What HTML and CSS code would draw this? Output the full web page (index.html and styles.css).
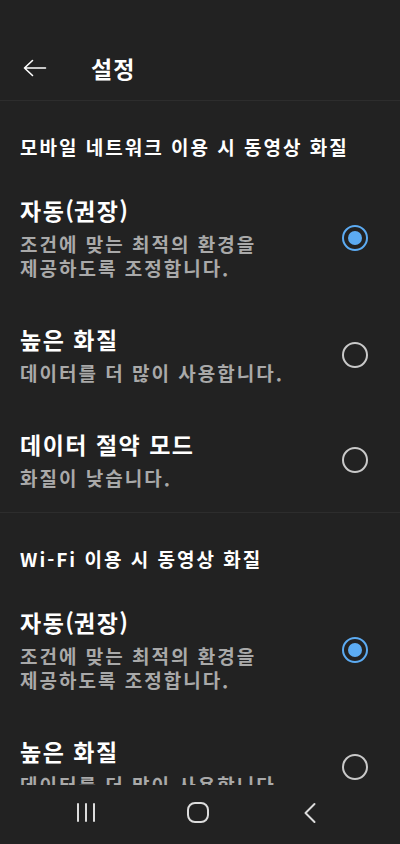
FILE: index.html
```html
<!DOCTYPE html>
<html lang="ko">
<head>
<meta charset="utf-8">
<title>설정</title>
<link rel="stylesheet" href="styles.css">
</head>
<body>
<div class="screen">
  <header class="appbar">
    <svg class="back" width="24" height="18" viewBox="0 0 24 18" aria-hidden="true">
      <path d="M1.5 9 H22.5 M9.5 1.5 L1.5 9 L9.5 16.5" fill="none" stroke="#ffffff" stroke-width="1.6" stroke-linecap="round" stroke-linejoin="round"/>
    </svg>
    <h1 class="title">설정</h1>
  </header>
  <main class="content">
    <section class="section">
      <h2 class="section-title">모바일 네트워크 이용 시 동영상 화질</h2>
      <div class="row">
        <div class="texts">
          <div class="row-title">자동<span class="paren">(</span>권장<span class="paren">)</span></div>
          <div class="row-desc">조건에 맞는 최적의 환경을<br>제공하도록 조정합니다.</div>
        </div>
        <span class="radio on"></span>
      </div>
      <div class="row">
        <div class="texts">
          <div class="row-title">높은 화질</div>
          <div class="row-desc">데이터를 더 많이 사용합니다.</div>
        </div>
        <span class="radio"></span>
      </div>
      <div class="row">
        <div class="texts">
          <div class="row-title">데이터 절약 모드</div>
          <div class="row-desc">화질이 낮습니다.</div>
        </div>
        <span class="radio"></span>
      </div>
    </section>
    <section class="section">
      <h2 class="section-title">Wi-Fi 이용 시 동영상 화질</h2>
      <div class="row">
        <div class="texts">
          <div class="row-title">자동<span class="paren">(</span>권장<span class="paren">)</span></div>
          <div class="row-desc">조건에 맞는 최적의 환경을<br>제공하도록 조정합니다.</div>
        </div>
        <span class="radio on"></span>
      </div>
      <div class="row">
        <div class="texts">
          <div class="row-title">높은 화질</div>
          <div class="row-desc">데이터를 더 많이 사용합니다.</div>
        </div>
        <span class="radio"></span>
      </div>
    </section>
  </main>
  <nav class="navbar">
    <div class="nav-slot">
      <span class="recents"><i></i><i></i><i></i></span>
    </div>
    <div class="nav-slot">
      <span class="home"></span>
    </div>
    <div class="nav-slot">
      <svg width="14" height="22" viewBox="0 0 14 22" aria-hidden="true">
        <path d="M11.5 2 L2.5 11 L11.5 20" fill="none" stroke="#dcdcdc" stroke-width="2" stroke-linecap="round" stroke-linejoin="round"/>
      </svg>
    </div>
  </nav>
</div>
</body>
</html>
```

FILE: styles.css
```css
* { box-sizing: border-box; }
html, body {
  margin: 0;
  padding: 0;
  background: #222222;
}
body {
  font-family: "Noto Sans CJK KR", "Noto Sans", sans-serif;
  color: #ffffff;
}
.screen {
  width: 400px;
  height: 844px;
  display: flex;
  flex-direction: column;
  overflow: hidden;
  background: #222222;
}
.appbar {
  flex: 0 0 auto;
  height: 101px;
  padding-top: 36px;
  display: flex;
  align-items: center;
  border-bottom: 1px solid #2d2d2d;
}
.appbar .back {
  margin-left: 23px;
  flex: 0 0 auto;
}
.title {
  margin: 0 0 0 44px;
  font-size: 23px;
  font-weight: 700;
  line-height: 30px;
  letter-spacing: 1px;
}
.content {
  flex: 1 1 auto;
  overflow: hidden;
}
.section {
  border-bottom: 1px solid #2d2d2d;
}
.section-title {
  margin: 0;
  padding: 34px 20px 14px;
  font-size: 19px;
  line-height: 24px;
  font-weight: 700;
  letter-spacing: 2px;
  white-space: nowrap;
}
.row {
  display: flex;
  align-items: center;
  padding: 22px 32px 22px 20px;
}
.texts {
  flex: 1 1 auto;
  display: flex;
  flex-direction: column;
  gap: 7px;
}
.row-title {
  font-size: 23px;
  line-height: 30px;
  font-weight: 700;
  letter-spacing: 1.5px;
  white-space: nowrap;
}
.paren {
  letter-spacing: 0;
}
.row-desc {
  font-size: 19px;
  line-height: 24px;
  font-weight: 700;
  color: #a9a9a9;
  letter-spacing: 2px;
  white-space: nowrap;
}
.radio {
  flex: 0 0 auto;
  width: 26px;
  height: 26px;
  border-radius: 50%;
  border: 2px solid #c9c9c9;
  display: flex;
  align-items: center;
  justify-content: center;
}
.radio.on {
  border-color: #5cabf2;
}
.radio.on::after {
  content: "";
  width: 14px;
  height: 14px;
  border-radius: 50%;
  background: #5cabf2;
}
.navbar {
  flex: 0 0 59px;
  display: grid;
  grid-template-columns: repeat(3, 112px);
  padding: 0 32px 4px 30px;
  align-items: center;
  background: #222222;
}
.nav-slot {
  display: flex;
  justify-content: center;
  align-items: center;
}
.recents {
  display: flex;
  gap: 6px;
  height: 19px;
}
.recents i {
  width: 2px;
  height: 19px;
  background: #dcdcdc;
  border-radius: 1px;
}
.home {
  width: 22px;
  height: 21px;
  border: 2px solid #dcdcdc;
  border-radius: 8px;
}
```
